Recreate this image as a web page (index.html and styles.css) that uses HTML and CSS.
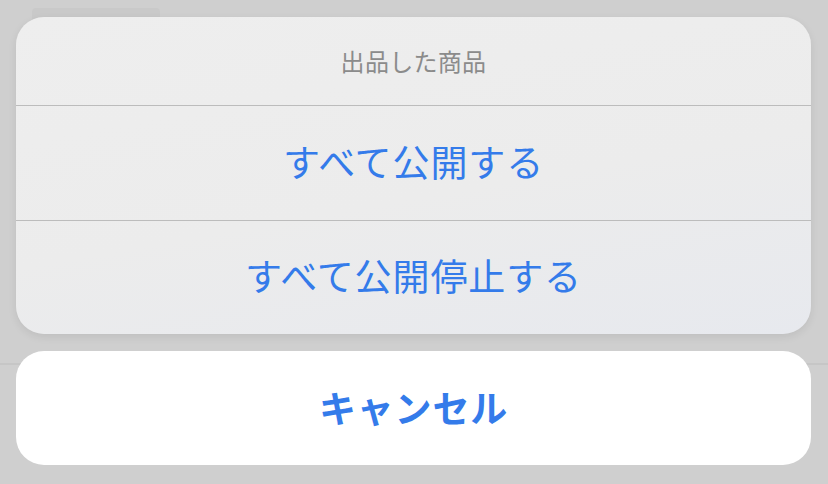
FILE: index.html
```html
<!DOCTYPE html>
<html lang="ja">
<head>
<meta charset="utf-8">
<link rel="stylesheet" href="styles.css">
</head>
<body>
<div class="backdrop">
  <div class="bg-tab"></div>
  <div class="bg-line"></div>
  <div class="sheet">
    <div class="group">
      <div class="title">出品した商品</div>
      <div class="action">すべて公開する</div>
      <div class="action">すべて公開停止する</div>
    </div>
    <div class="cancel">キャンセル</div>
  </div>
</div>
</body>
</html>
```
FILE: styles.css
```css
html, body {
  margin: 0;
  padding: 0;
}
body {
  width: 828px;
  height: 484px;
  overflow: hidden;
  background: #cfcfcf;
  font-family: "Noto Sans CJK JP", "Noto Sans", sans-serif;
}
.backdrop {
  position: relative;
  width: 828px;
  height: 484px;
}
.bg-tab {
  position: absolute;
  left: 32px;
  top: 8px;
  width: 128px;
  height: 12px;
  background: #c9c9c9;
  border-radius: 4px 4px 0 0;
}
.bg-line {
  position: absolute;
  left: 0;
  right: 0;
  top: 363px;
  height: 2px;
  background: #c6c6c6;
}
.sheet {
  position: relative;
  padding: 17px 17px 0 16px;
  display: flex;
  flex-direction: column;
  gap: 17px;
}
.group {
  width: 795px;
  height: 317px;
  border-radius: 28px;
  background: linear-gradient(170deg, #eeeeee 0%, #ececec 55%, #e7e9ee 100%);
  box-shadow: 0 3px 8px rgba(0, 0, 0, 0.08);
  display: flex;
  flex-direction: column;
  overflow: hidden;
}
.title {
  height: 89px;
  flex: none;
  box-sizing: border-box;
  padding-bottom: 1px;
  display: flex;
  align-items: center;
  justify-content: center;
  color: #8b8b8b;
  font-size: 24px;
  letter-spacing: 0.3px;
  border-bottom: 1px solid #bcbcbc;
}
.action {
  height: 114px;
  flex: none;
  box-sizing: border-box;
  padding-bottom: 5px;
  display: flex;
  align-items: center;
  justify-content: center;
  color: #347bea;
  font-size: 37px;
  letter-spacing: 0.9px;
}
.action + .action {
  border-top: 1px solid #bcbcbc;
  height: 114px;
}
.cancel {
  width: 795px;
  height: 114px;
  box-sizing: border-box;
  padding-bottom: 3px;
  border-radius: 28px;
  background: #ffffff;
  display: flex;
  align-items: center;
  justify-content: center;
  color: #347bea;
  font-size: 37px;
  letter-spacing: 0.8px;
  font-weight: 700;
}
```
